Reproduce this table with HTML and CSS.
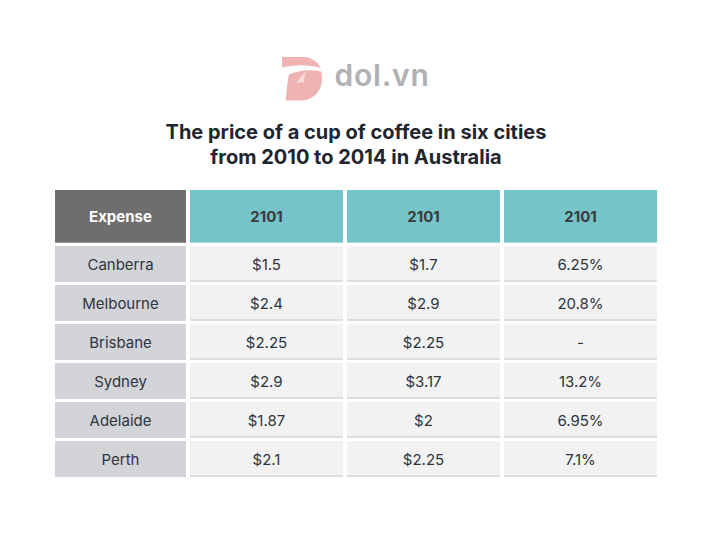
FILE: index.html
```html
<!DOCTYPE html>
<html lang="en">
<head>
<meta charset="utf-8">
<title>Coffee prices</title>
<link rel="stylesheet" href="styles.css">
</head>
<body>
<div class="page">
  <div class="logo">
    <svg class="logo-mark" width="40" height="46" viewBox="0 0 40 46">
      <path d="M0,1 H21 C29,1 35.5,5 38.5,12 C28,8.5 14,8.5 0,11.5 Z" fill="#efb3b3"/>
      <path d="M7,18.5 C17,14 29,13 39.2,15.5 C39.8,18 40,20.5 40,23 C40,35 31,44.5 19,44.5 H3.5 C4.5,35 5.5,25 7,18.5 Z" fill="#efb3b3"/>
      <path d="M15,28 C17,22 20,18 25,16 C22,20 21,24 22,27 C20,25 17,26 15,28 Z" fill="#f7dcdc"/>
    </svg>
    <span class="logo-text">dol.vn</span>
  </div>
  <h1 class="title">The price of a cup of coffee in six cities<br>from 2010 to 2014 in Australia</h1>
  <div class="grid">
    <div class="cell head head-label">Expense</div>
    <div class="cell head">2101</div>
    <div class="cell head">2101</div>
    <div class="cell head">2101</div>

    <div class="cell label">Canberra</div>
    <div class="cell data">$1.5</div>
    <div class="cell data">$1.7</div>
    <div class="cell data">6.25%</div>

    <div class="cell label">Melbourne</div>
    <div class="cell data">$2.4</div>
    <div class="cell data">$2.9</div>
    <div class="cell data">20.8%</div>

    <div class="cell label">Brisbane</div>
    <div class="cell data">$2.25</div>
    <div class="cell data">$2.25</div>
    <div class="cell data">-</div>

    <div class="cell label">Sydney</div>
    <div class="cell data">$2.9</div>
    <div class="cell data">$3.17</div>
    <div class="cell data">13.2%</div>

    <div class="cell label">Adelaide</div>
    <div class="cell data">$1.87</div>
    <div class="cell data">$2</div>
    <div class="cell data">6.95%</div>

    <div class="cell label">Perth</div>
    <div class="cell data">$2.1</div>
    <div class="cell data">$2.25</div>
    <div class="cell data">7.1%</div>
  </div>
</div>
</body>
</html>
```

FILE: styles.css
```css
html, body {
  margin: 0;
  padding: 0;
  background: #ffffff;
}

body {
  font-family: Inter, "Noto Sans", "Liberation Sans", sans-serif;
  color: #2e3540;
}

.page {
  display: flex;
  flex-direction: column;
  align-items: center;
  padding-top: 56px;
}

.logo {
  display: flex;
  align-items: flex-start;
  gap: 12px;
  height: 46px;
}

.logo-mark {
  display: block;
}

.logo-text {
  margin-top: 4px;
  font-size: 30px;
  line-height: 30px;
  font-weight: 600;
  letter-spacing: 0.8px;
  color: #b1b1b5;
}

.title {
  margin: 18px 0 0;
  font-size: 20px;
  line-height: 25px;
  font-weight: 700;
  text-align: center;
  color: #1f2630;
}

.grid {
  margin-top: 20px;
  width: 602px;
  display: grid;
  grid-template-columns: 131px repeat(3, 1fr);
  grid-template-rows: 53px repeat(6, 36px);
  gap: 3px 4px;
}

.cell {
  display: flex;
  align-items: center;
  justify-content: center;
  box-sizing: border-box;
  font-size: 15px;
}

.head {
  background: #74c4ca;
  color: #3a3a3c;
  font-weight: 700;
  border-bottom: 1px solid #a6dade;
}

.head-label {
  background: #6e6e6e;
  color: #ffffff;
  border-bottom: 1px solid #9a9a9a;
}

.label {
  background: #d3d4d8;
  color: #2e3540;
}

.data {
  background: #f2f2f2;
  border-bottom: 2px solid #dddddd;
  padding-top: 2px;
}
```
